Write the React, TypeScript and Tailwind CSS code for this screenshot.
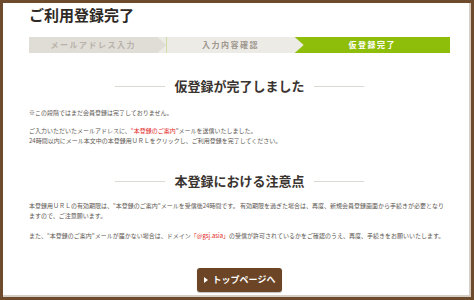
const Heading = ({ children }: { children: string }) => (
  <div className="flex items-center justify-center gap-[9px]">
    <span className="h-px w-[50px] bg-[#dcd8d2]" />
    <h2 className="text-[13px] font-bold leading-[20px] text-[#3a3430]">{children}</h2>
    <span className="h-px w-[50px] bg-[#dcd8d2]" />
  </div>
);

const Steps = () => {
  const arrow = "[clip-path:polygon(0_0,calc(100%-9px)_0,100%_50%,calc(100%-9px)_100%,0_100%)]";
  return (
    <div className="flex h-[16px] text-[8px] font-bold leading-[16px] tracking-[1.5px]">
      <div className="flex-1 bg-[#edebe6]">
        <div className={`h-full bg-[#e0ddd7] pr-[9px] text-center text-[#b8b2aa] ${arrow}`}>メールアドレス入力</div>
      </div>
      <div className="flex-1 bg-[#8fbe0a]">
        <div className={`h-full bg-[#edebe6] pr-[9px] text-center text-[#9e978e] ${arrow}`}>入力内容確認</div>
      </div>
      <div className="flex-1 bg-[#8fbe0a] pr-[9px] text-center text-white">仮登録完了</div>
    </div>
  );
};

export default function App() {
  return (
    <div className="h-[300px] w-[474px] overflow-hidden border-[3px] border-[#6f4b2d] bg-white font-['Noto_Sans_CJK_JP','Noto_Sans',sans-serif]">
      <div className="h-full border-b-2 border-r-2 border-[#d6cec4] pl-[26px] pr-[19px]">
        <h1 className="pt-[3px] text-[15px] font-bold leading-[18px] text-[#2f2a26]">ご利用登録完了</h1>

        <div className="mt-[13px]">
          <Steps />
        </div>

        <div className="mt-[23px]">
          <Heading>仮登録が完了しました</Heading>
        </div>

        <div className="text-[6px] leading-[10px] text-[#5c5651] whitespace-nowrap">
          <p className="mt-[12px]">※この段階ではまだ会員登録は完了しておりません。</p>
          <p className="mt-[8px]">
            ご入力いただいたメールアドレスに、<span className="text-[#e2261d]">“本登録のご案内</span>”メールを送信いたしました。
            <br />
            24時間以内にメール本文中の本登録用ＵＲＬをクリックし、ご利用登録を完了してください。
          </p>
        </div>

        <div className="mt-[25px]">
          <Heading>本登録における注意点</Heading>
        </div>

        <div className="text-[6px] leading-[10px] text-[#5c5651] whitespace-nowrap">
          <p className="mt-[10px]">
            本登録用ＵＲＬの有効期限は、“本登録のご案内”メールを受信後24時間です。 有効期限を過ぎた場合は、再度、新規会員登録画面から手続きが必要となり
            <br />
            ますので、ご注意願います。
          </p>
          <p className="mt-[10px]">
            また、“本登録のご案内”メールが届かない場合は、ドメイン<span className="text-[#e2261d]">「@gsj.asia」</span>の受信が許可されているかをご確認のうえ、再度、手続きをお願いいたします。
          </p>
        </div>

        <div className="mt-[27px] flex justify-center">
          <button className="flex h-[24px] w-[85px] items-center justify-center gap-[5px] rounded-[3px] bg-[#6b4526] text-[9px] font-bold text-white shadow-[0_1px_1px_rgba(0,0,0,0.25)]">
            <svg width="4" height="6" viewBox="0 0 4 6">
              <path d="M0 0 L4 3 L0 6 Z" fill="#fff" />
            </svg>
            トップページへ
          </button>
        </div>
      </div>
    </div>
  );
}
